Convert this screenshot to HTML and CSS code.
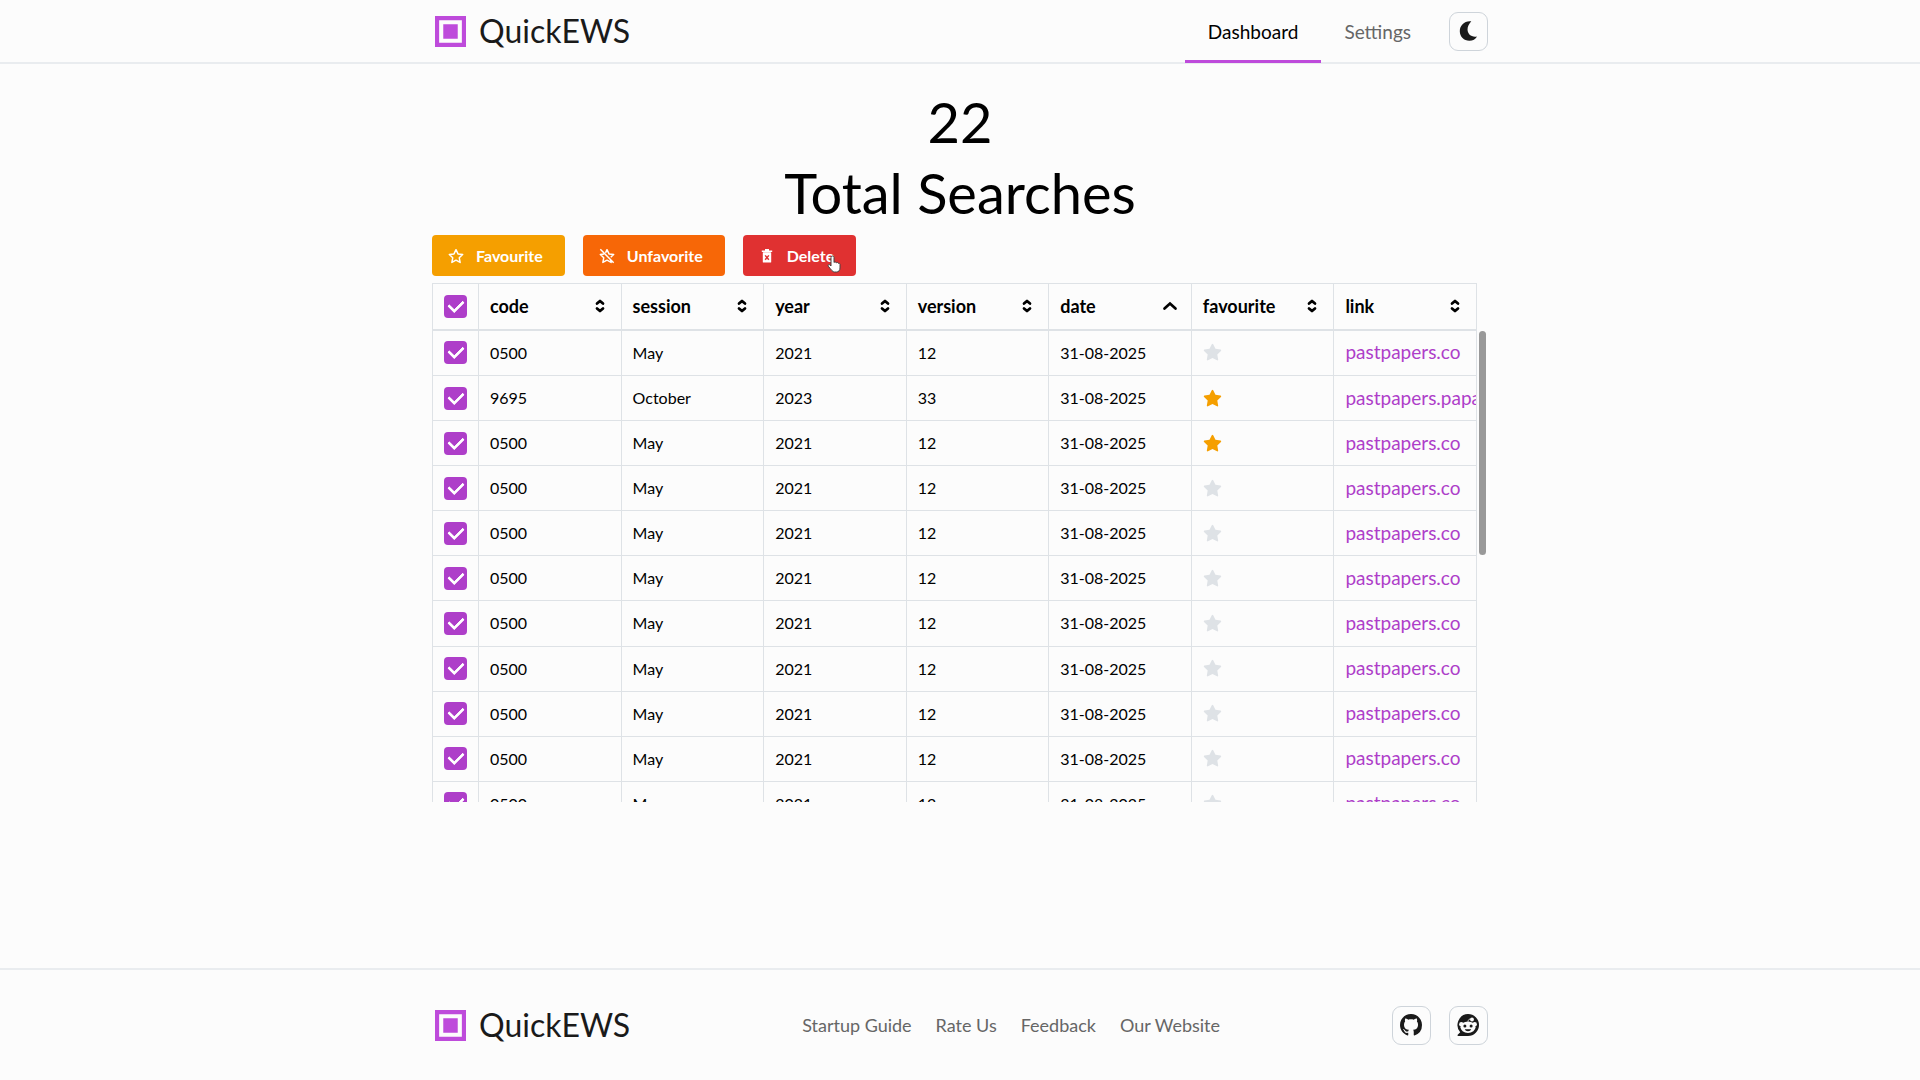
FILE: index.html
```html
<!DOCTYPE html>
<html lang="en">
<head>
<meta charset="utf-8">
<title>QuickEWS</title>
<link rel="stylesheet" href="styles.css">
</head>
<body>
<svg class="sprite" aria-hidden="true">
  <symbol id="logo" viewBox="0 0 30 30"><path fill="#be4bdb" fill-rule="evenodd" d="M0 0h30v30H0zM4 4v22h22V4zM8 8h14v14H8z"/></symbol>
  <symbol id="sort" viewBox="0 0 10 14"><path d="M2 4.600L5 1.900l3 2.700M2 9.400L5 12.100l3-2.700" fill="none" stroke="currentColor" stroke-width="2.700" stroke-linecap="round" stroke-linejoin="round"/></symbol>
  <symbol id="up" viewBox="0 0 16 10"><path d="M2.500 7.500L8 2.500l5.500 5" fill="none" stroke="currentColor" stroke-width="2.700" stroke-linecap="round"/></symbol>
  <symbol id="star" viewBox="0 0 24 24"><path fill="currentColor" d="M8.240 7.340l-6.380.93-.11.020a1 1 0 0 0-.44 1.680l4.620 4.500-1.090 6.360-.010.110a1 1 0 0 0 1.460.940l5.700-3 5.700 3 .1.050a1 1 0 0 0 1.350-1.110l-1.090-6.360 4.620-4.500.080-.080a1 1 0 0 0-.630-1.620l-6.380-.930-2.850-5.780a1 1 0 0 0-1.800 0z"/></symbol>
  <symbol id="star-line" viewBox="0 0 24 24"><path d="M12 2.500l3 6.400 7 .9-5.100 4.900 1.300 7-6.200-3.400-6.200 3.400 1.300-7L2 9.800l7-.9z" fill="none" stroke="currentColor" stroke-width="2.200" stroke-linejoin="round"/></symbol>
  <symbol id="star-off" viewBox="0 0 24 24"><path d="M9.800 7.300L12 2.500l3 6.400 7 .9-4.400 4.200M17.300 17.300l.9 4.400-6.200-3.400-6.200 3.400 1.300-7L2 9.800l5.500-.8M2 2l20 20" fill="none" stroke="currentColor" stroke-width="2.200" stroke-linejoin="round"/></symbol>
  <symbol id="bin" viewBox="-1 -1 18 20"><path d="M3.500 5h9v11.500h-9z" fill="currentColor" stroke="currentColor" stroke-width="1.500" stroke-linejoin="round"/><path d="M1.500 3h13M5.500 1.200h5" stroke="currentColor" stroke-width="2"/><path d="M5.700 8.200l4.600 5.600M10.300 8.200l-4.600 5.600" stroke="#e03131" stroke-width="1.900"/></symbol>
</svg>

<header class="top">
  <div class="container top-row">
    <a class="brand" href="#"><svg class="logo"><use href="#logo"/></svg>QuickEWS</a>
    <nav class="nav">
      <a class="nav-link active" href="#">Dashboard</a>
      <a class="nav-link" href="#">Settings</a>
      <button class="square" type="button" aria-label="Toggle colour scheme"><svg width="20" height="20" viewBox="0 0 20 20"><path fill="#1a1a1a" d="M12.300.3C5.800-.6.800 4.200.8 10.200c0 5.500 4.200 9.500 9.500 9.500 3.500 0 6.300-1.600 7.800-4.300-8.100 1.800-13.600-6.700-5.800-15.100z"/></svg></button>
    </nav>
  </div>
</header>

<main class="container main">
  <h1 class="total">22<br>Total Searches</h1>
  <div class="actions">
    <button class="btn yellow" type="button"><svg class="btn-icon"><use href="#star-line"/></svg>Favourite</button>
    <button class="btn orange" type="button"><svg class="btn-icon"><use href="#star-off"/></svg>Unfavorite</button>
    <button class="btn red" type="button"><svg class="btn-icon"><use href="#bin"/></svg>Delete
      <svg class="pointer" viewBox="0 0 14 18"><path d="M4 11V2.500a1.500 1.500 0 0 1 3 0v5a1.300 1.300 0 0 1 2.300.3 1.300 1.300 0 0 1 2 .5c1-.3 1.700.3 1.700 1.200V13c0 2.500-1.500 4-3.500 4H7.500C5.500 17 4.500 15 1.300 11.200c-.7-1.300.7-2.200 1.700-1.200z" fill="#fff" stroke="#444" stroke-width="1"/></svg>
    </button>
  </div>
  <div class="list">
    <div class="clip">
      <table class="table">
        <thead>
          <tr>
            <th class="pick"><input class="check" type="checkbox" aria-label="Select all" checked></th>
            <th><div class="head">code<svg class="sort"><use href="#sort"/></svg></div></th>
            <th><div class="head">session<svg class="sort"><use href="#sort"/></svg></div></th>
            <th><div class="head">year<svg class="sort"><use href="#sort"/></svg></div></th>
            <th><div class="head">version<svg class="sort"><use href="#sort"/></svg></div></th>
            <th><div class="head">date<svg class="sort"><use href="#up"/></svg></div></th>
            <th><div class="head">favourite<svg class="sort"><use href="#sort"/></svg></div></th>
            <th><div class="head">link<svg class="sort"><use href="#sort"/></svg></div></th>
          </tr>
        </thead>
        <tbody id="rows"></tbody>
      </table>
    </div>
    <div class="thumb"></div>
  </div>
</main>

<footer class="bottom">
  <div class="container bottom-row">
    <a class="brand" href="#"><svg class="logo"><use href="#logo"/></svg>QuickEWS</a>
    <nav class="links">
      <a href="#">Startup Guide</a>
      <a href="#">Rate Us</a>
      <a href="#">Feedback</a>
      <a href="#">Our Website</a>
    </nav>
    <div class="social">
      <a class="square" href="#" aria-label="GitHub"><svg width="22" height="22" viewBox="0 0 16 16"><path fill="#1a1a1a" d="M8 0C3.580 0 0 3.580 0 8c0 3.540 2.290 6.530 5.470 7.590.4.070.55-.17.55-.38 0-.19-.01-.82-.01-1.490-2.010.37-2.530-.49-2.690-.94-.09-.23-.48-.94-.82-1.130-.28-.15-.68-.52-.01-.53.63-.01 1.080.58 1.230.82.72 1.210 1.870.87 2.330.66.07-.52.28-.87.51-1.070-1.780-.2-3.640-.89-3.640-3.950 0-.87.31-1.590.82-2.150-.08-.2-.36-1.020.08-2.120 0 0 .67-.21 2.200.82.64-.18 1.320-.27 2-.27s1.360.09 2 .27c1.530-1.040 2.200-.82 2.200-.82.44 1.100.16 1.920.08 2.120.51.56.82 1.270.82 2.150 0 3.070-1.870 3.750-3.650 3.950.29.25.54.73.54 1.480 0 1.070-.01 1.930-.01 2.200 0 .21.15.46.55.38A8.010 8.010 0 0 0 16 8c0-4.420-3.580-8-8-8z"/></svg></a>
      <a class="square" href="#" aria-label="Reddit"><svg width="24" height="24" viewBox="0 0 24 24"><path fill="#1a1a1a" d="M12 1a11 11 0 1 1 0 22H2.300c-.8 0-1.100-.8-.6-1.300l2.500-2.500A11 11 0 0 1 12 1z"/><circle cx="16" cy="6.500" r="1.900" fill="#fcfcfc"/><path d="M12 8.700c.2-2.300 1.400-2.900 3-2.500" fill="none" stroke="#fcfcfc" stroke-width=".8"/><circle cx="5.300" cy="11.200" r="2.200" fill="#fcfcfc"/><circle cx="18.700" cy="11.200" r="2.200" fill="#fcfcfc"/><ellipse cx="12" cy="14.200" rx="7.500" ry="5.800" fill="#fcfcfc"/><circle cx="8.900" cy="13" r="1.500" fill="#1a1a1a"/><circle cx="15.100" cy="13" r="1.500" fill="#1a1a1a"/><path d="M8.800 16.200h6.400c-.6 2.600-5.800 2.600-6.400 0z" fill="#1a1a1a"/></svg></a>
    </div>
  </div>
</footer>
<script src="app.js"></script>
</body>
</html>
```
FILE: styles.css
```css
* { box-sizing: border-box; }
body {
  margin: 0;
  min-height: 100vh;
  display: flex;
  flex-direction: column;
  background: #fcfcfc;
  color: #000;
  font: 16px/24px Lato, "Open Sans", sans-serif;
}
a { color: inherit; text-decoration: none; }
.sprite { position: absolute; width: 0; height: 0; }
.container { width: 100%; max-width: 1056px; margin: 0 auto; }

.top { border-bottom: 2px solid #e9ecef; }
.top-row { display: flex; justify-content: space-between; height: 62px; }
.brand {
  display: flex;
  align-items: center;
  gap: 13px;
  padding-left: 3px;
  color: #1a1a1a;
  font-size: 32px;
  line-height: 40px;
}
.logo { width: 31px; height: 31px; }
.nav { display: flex; align-items: center; font-size: 19px; color: #666; }
.nav-link {
  display: flex;
  align-items: center;
  height: 63px;
  padding: 5px 23px 0;
  border-bottom: 3px solid transparent;
}
.nav-link.active { color: #000; border-color: #be4bdb; }
.square {
  display: flex;
  align-items: center;
  justify-content: center;
  width: 39px;
  height: 39px;
  padding: 0;
  border: 1px solid #ced4da;
  border-radius: 9px;
  background: transparent;
}
.nav .square { margin-left: 15px; }

.main { flex: 1; }
.total {
  margin: 22px 0 7px;
  text-align: center;
  font-size: 56px;
  line-height: 71px;
  font-weight: 400;
}
.actions { display: flex; gap: 18px; margin-bottom: 7px; }
.btn {
  position: relative;
  display: flex;
  align-items: center;
  gap: 12px;
  height: 41px;
  padding: 0 22px 0 16px;
  border: 0;
  border-radius: 4px;
  color: #fff;
  font: 700 16px/24px Lato, "Open Sans", sans-serif;
}
.btn-icon { width: 16px; height: 16px; }
.yellow { background: #f59f00; }
.orange { background: #f76707; }
.red { background: #e03131; }
.pointer { position: absolute; right: 15px; bottom: 3px; width: 14px; height: 18px; }

.list { position: relative; }
.clip { max-height: 519px; overflow: hidden; }
.table {
  width: 1045px;
  max-width: 100%;
  height: 544px;
  table-layout: fixed;
  border-collapse: collapse;
}
.table th, .table td {
  padding: 0 11px;
  border: 1px solid #dee2e6;
  text-align: left;
  overflow: hidden;
  white-space: nowrap;
}
.table .pick { width: 46px; }
.table th { height: 46px; border-bottom-width: 2px; font-weight: 700; font-size: 18px; }
.head { display: flex; align-items: center; justify-content: space-between; }
.sort { width: 16px; height: 14px; margin-right: 2px; }
.check {
  display: flex;
  align-items: center;
  justify-content: center;
  appearance: none;
  width: 23px;
  height: 23px;
  margin: 0;
  border-radius: 4px;
  background: #ae3ec9;
}
.check::after {
  content: "";
  width: 7px;
  height: 12px;
  margin-bottom: 4px;
  border: solid #fff;
  border-width: 0 3px 3px 0;
  border-radius: 1px;
  transform: rotate(45deg);
}
.star { display: block; width: 19px; height: 19px; color: #dee2e6; }
.star.on { color: #f59f00; }
.paper { color: #ae3ec9; font-size: 19px; }
.thumb {
  position: absolute;
  top: 48px;
  right: 2px;
  width: 7px;
  height: 224px;
  border-radius: 4px;
  background: #999;
}

.bottom { border-top: 2px solid #e9ecef; }
.bottom-row { display: flex; align-items: center; justify-content: space-between; height: 110px; }
.links { display: flex; gap: 24px; color: #666; font-size: 18px; }
.social { display: flex; gap: 18px; }
```
FILE: app.js
```js
const usual = ["0500", "May", "2021", "12", false, "pastpapers.co"];
const searches = [
  usual,
  ["9695", "October", "2023", "33", true, "pastpapers.papacambridge.com"],
  ["0500", "May", "2021", "12", true, "pastpapers.co"],
  ...Array(8).fill(usual),
];

document.getElementById("rows").innerHTML = searches.map(([code, session, year, version, fav, link]) => `
  <tr>
    <td><input class="check" type="checkbox" aria-label="Select ${code}" checked></td>
    <td>${code}</td>
    <td>${session}</td>
    <td>${year}</td>
    <td>${version}</td>
    <td>31-08-2025</td>
    <td><svg class="star${fav ? " on" : ""}"><use href="#star"/></svg></td>
    <td><a class="paper" href="#">${link}</a></td>
  </tr>`).join("");
```
